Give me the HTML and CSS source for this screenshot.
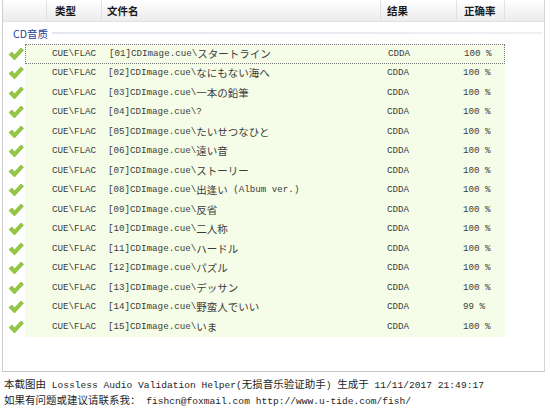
FILE: index.html
```html
<!DOCTYPE html>
<html>
<head>
<meta charset="utf-8">
<link rel="stylesheet" href="styles.css">
</head>
<body>
<div class="panel">
  <div class="head">
    <div class="hc"></div>
    <div class="hc">类型</div>
    <div class="hc">文件名</div>
    <div class="hc">结果</div>
    <div class="hc">正确率</div>
    <div class="hc last"></div>
  </div>
  <div class="group"><span class="gtitle">CD音质</span><span class="gline"></span></div>
  <div class="rows">
    <div class="row focus"><div class="chk"><svg viewBox="0 0 16 14" width="16" height="14"><path d="M1 7.5 L4 5 L6.5 8 L13 1 L15.5 3.2 L6.5 13 Z"/></svg></div><div class="cells"><div></div><div class="m">CUE\FLAC</div><div><span class="m">[01]CDImage.cue\</span><span class="j">スタートライン</span></div><div class="m">CDDA</div><div class="m">100 %</div></div></div>
    <div class="row"><div class="chk"><svg viewBox="0 0 16 14" width="16" height="14"><path d="M1 7.5 L4 5 L6.5 8 L13 1 L15.5 3.2 L6.5 13 Z"/></svg></div><div class="cells"><div></div><div class="m">CUE\FLAC</div><div><span class="m">[02]CDImage.cue\</span><span class="j">なにもない海へ</span></div><div class="m">CDDA</div><div class="m">100 %</div></div></div>
    <div class="row"><div class="chk"><svg viewBox="0 0 16 14" width="16" height="14"><path d="M1 7.5 L4 5 L6.5 8 L13 1 L15.5 3.2 L6.5 13 Z"/></svg></div><div class="cells"><div></div><div class="m">CUE\FLAC</div><div><span class="m">[03]CDImage.cue\</span><span class="j">一本の鉛筆</span></div><div class="m">CDDA</div><div class="m">100 %</div></div></div>
    <div class="row"><div class="chk"><svg viewBox="0 0 16 14" width="16" height="14"><path d="M1 7.5 L4 5 L6.5 8 L13 1 L15.5 3.2 L6.5 13 Z"/></svg></div><div class="cells"><div></div><div class="m">CUE\FLAC</div><div><span class="m">[04]CDImage.cue\?</span></div><div class="m">CDDA</div><div class="m">100 %</div></div></div>
    <div class="row"><div class="chk"><svg viewBox="0 0 16 14" width="16" height="14"><path d="M1 7.5 L4 5 L6.5 8 L13 1 L15.5 3.2 L6.5 13 Z"/></svg></div><div class="cells"><div></div><div class="m">CUE\FLAC</div><div><span class="m">[05]CDImage.cue\</span><span class="j">たいせつなひと</span></div><div class="m">CDDA</div><div class="m">100 %</div></div></div>
    <div class="row"><div class="chk"><svg viewBox="0 0 16 14" width="16" height="14"><path d="M1 7.5 L4 5 L6.5 8 L13 1 L15.5 3.2 L6.5 13 Z"/></svg></div><div class="cells"><div></div><div class="m">CUE\FLAC</div><div><span class="m">[06]CDImage.cue\</span><span class="j">遠い音</span></div><div class="m">CDDA</div><div class="m">100 %</div></div></div>
    <div class="row"><div class="chk"><svg viewBox="0 0 16 14" width="16" height="14"><path d="M1 7.5 L4 5 L6.5 8 L13 1 L15.5 3.2 L6.5 13 Z"/></svg></div><div class="cells"><div></div><div class="m">CUE\FLAC</div><div><span class="m">[07]CDImage.cue\</span><span class="j">ストーリー</span></div><div class="m">CDDA</div><div class="m">100 %</div></div></div>
    <div class="row"><div class="chk"><svg viewBox="0 0 16 14" width="16" height="14"><path d="M1 7.5 L4 5 L6.5 8 L13 1 L15.5 3.2 L6.5 13 Z"/></svg></div><div class="cells"><div></div><div class="m">CUE\FLAC</div><div><span class="m">[08]CDImage.cue\</span><span class="j">出逢い</span><span class="m"> (Album ver.)</span></div><div class="m">CDDA</div><div class="m">100 %</div></div></div>
    <div class="row"><div class="chk"><svg viewBox="0 0 16 14" width="16" height="14"><path d="M1 7.5 L4 5 L6.5 8 L13 1 L15.5 3.2 L6.5 13 Z"/></svg></div><div class="cells"><div></div><div class="m">CUE\FLAC</div><div><span class="m">[09]CDImage.cue\</span><span class="j">反省</span></div><div class="m">CDDA</div><div class="m">100 %</div></div></div>
    <div class="row"><div class="chk"><svg viewBox="0 0 16 14" width="16" height="14"><path d="M1 7.5 L4 5 L6.5 8 L13 1 L15.5 3.2 L6.5 13 Z"/></svg></div><div class="cells"><div></div><div class="m">CUE\FLAC</div><div><span class="m">[10]CDImage.cue\</span><span class="j">二人称</span></div><div class="m">CDDA</div><div class="m">100 %</div></div></div>
    <div class="row"><div class="chk"><svg viewBox="0 0 16 14" width="16" height="14"><path d="M1 7.5 L4 5 L6.5 8 L13 1 L15.5 3.2 L6.5 13 Z"/></svg></div><div class="cells"><div></div><div class="m">CUE\FLAC</div><div><span class="m">[11]CDImage.cue\</span><span class="j">ハードル</span></div><div class="m">CDDA</div><div class="m">100 %</div></div></div>
    <div class="row"><div class="chk"><svg viewBox="0 0 16 14" width="16" height="14"><path d="M1 7.5 L4 5 L6.5 8 L13 1 L15.5 3.2 L6.5 13 Z"/></svg></div><div class="cells"><div></div><div class="m">CUE\FLAC</div><div><span class="m">[12]CDImage.cue\</span><span class="j">パズル</span></div><div class="m">CDDA</div><div class="m">100 %</div></div></div>
    <div class="row"><div class="chk"><svg viewBox="0 0 16 14" width="16" height="14"><path d="M1 7.5 L4 5 L6.5 8 L13 1 L15.5 3.2 L6.5 13 Z"/></svg></div><div class="cells"><div></div><div class="m">CUE\FLAC</div><div><span class="m">[13]CDImage.cue\</span><span class="j">デッサン</span></div><div class="m">CDDA</div><div class="m">100 %</div></div></div>
    <div class="row"><div class="chk"><svg viewBox="0 0 16 14" width="16" height="14"><path d="M1 7.5 L4 5 L6.5 8 L13 1 L15.5 3.2 L6.5 13 Z"/></svg></div><div class="cells"><div></div><div class="m">CUE\FLAC</div><div><span class="m">[14]CDImage.cue\</span><span class="j">野蛮人でいい</span></div><div class="m">CDDA</div><div class="m">99 %</div></div></div>
    <div class="row"><div class="chk"><svg viewBox="0 0 16 14" width="16" height="14"><path d="M1 7.5 L4 5 L6.5 8 L13 1 L15.5 3.2 L6.5 13 Z"/></svg></div><div class="cells"><div></div><div class="m">CUE\FLAC</div><div><span class="m">[15]CDImage.cue\</span><span class="j">いま</span></div><div class="m">CDDA</div><div class="m">100 %</div></div></div>
  </div>
</div>
<div class="footer">
  <div class="fl"><span class="c">本截图由</span><span class="m"> Lossless Audio Validation Helper(</span><span class="c">无损音乐验证助手</span><span class="m">) </span><span class="c">生成于</span><span class="m"> 11/11/2017 21:49:17</span></div>
  <div class="fl"><span class="c">如果有问题或建议请联系我：</span><span class="m"> fishcn@foxmail.com http://www.u-tide.com/fish/</span></div>
</div>
</body>
</html>
```

FILE: styles.css
```css
html, body {
  margin: 0;
  padding: 0;
  background: #ffffff;
}
body {
  width: 550px;
  height: 411px;
  overflow: hidden;
  font-family: "Noto Sans CJK SC", sans-serif;
}
.panel {
  margin-left: 2px;
  width: 541px;
  height: 371px;
  border-left: 1px solid #cfcfcf;
  border-right: 1px solid #d6d6d6;
  border-bottom: 1px solid #c4c4c4;
  overflow: hidden;
}
.head {
  display: grid;
  grid-template-columns: 44px 55px 279px 76px 48px 1fr;
  height: 21px;
  border-bottom: 1px solid #e2e2e2;
  background: linear-gradient(#ffffff, #f3f3f3 60%, #ececec);
}
.hc {
  border-right: 1px solid #e0e0e0;
  font-size: 10.5px;
  line-height: 21px;
  color: #1a1a1a;
  padding-left: 7px;
  font-weight: 600;
}
.hc:nth-child(2) { padding-left: 8px; }
.hc:nth-child(3) { padding-left: 5px; }
.hc:nth-child(4) { padding-left: 6px; }
.hc:nth-child(5) { padding-left: 7px; }
.hc.last { border-right: none; }
.group {
  display: flex;
  align-items: center;
  height: 22px;
  padding-left: 10px;
}
.gtitle {
  font-size: 10.5px;
  color: #2b3f9e;
  margin-right: 4px;
}
.gline {
  flex: 1;
  height: 2px;
  margin-right: 2px;
  background: linear-gradient(90deg, #e3e7ef, #eef0f4);
}
.rows {
  display: flex;
  flex-direction: column;
}
.row {
  display: flex;
  height: 19.5px;
}
.chk {
  width: 22px;
  display: flex;
  align-items: center;
  padding-left: 5px;
  box-sizing: border-box;
}
.chk svg path {
  fill: #93c840;
  stroke: #78ad2e;
  stroke-width: 0.6;
}
.cells {
  width: 480px;
  display: grid;
  grid-template-columns: 22px 55px 279px 76px 48px;
  background: #f5fce7;
  color: #3c3c3c;
  align-items: stretch;
  box-sizing: border-box;
  white-space: nowrap;
}
.cells > div {
  display: flex;
  align-items: center;
  overflow: hidden;
}
.cells > div:nth-child(2) { padding-left: 5px; }
.cells > div:nth-child(3) { padding-left: 6px; }
.cells > div:nth-child(4) { padding-left: 6px; }
.cells > div:nth-child(5) { padding-left: 6px; }
.row.focus .cells {
  border: 1px dotted #7a7a7a;
}
.row.focus .cells > div:nth-child(2) { padding-left: 4px; }
.m {
  font-family: "Liberation Mono", monospace;
  font-size: 9.2px;
  line-height: 12px;
  white-space: pre;
}
.j {
  font-family: "Noto Sans CJK JP", sans-serif;
  font-size: 10.5px;
  line-height: 12px;
}
.footer {
  padding-left: 4px;
  padding-top: 2px;
  color: #1e1e1e;
}
.fl {
  height: 15.5px;
  line-height: 15.5px;
  white-space: nowrap;
}
.fl .c {
  font-family: "Noto Sans CJK SC", sans-serif;
  font-size: 10.5px;
}
.fl .m {
  font-size: 9.6px;
  line-height: 15.5px;
}
```
